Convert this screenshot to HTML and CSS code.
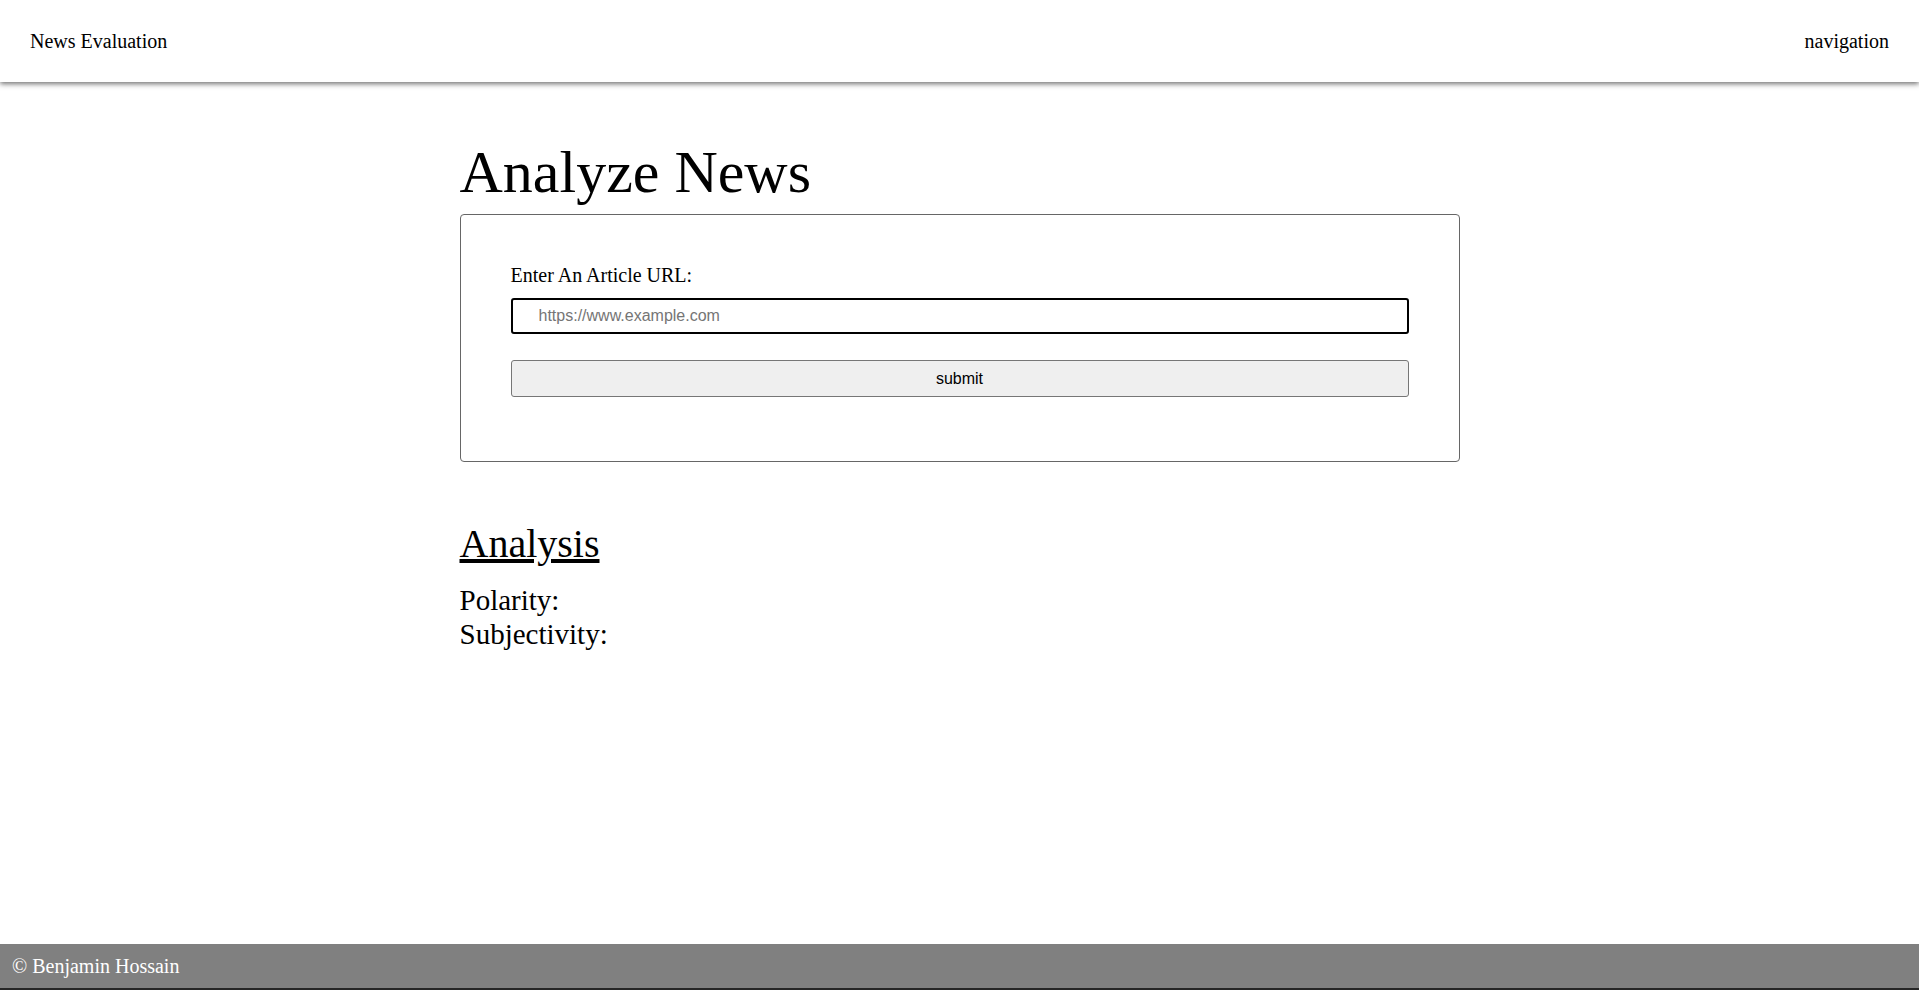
FILE: index.html
```html
<!DOCTYPE html>
<html lang="en">
<head>
<meta charset="utf-8">
<title>News Evaluation</title>
<link rel="stylesheet" href="styles.css">
</head>
<body>
<div class="page">
  <header class="topbar">
    <div class="brand">News Evaluation</div>
    <nav class="nav">navigation</nav>
  </header>
  <main class="main">
    <section class="container">
      <h1 class="title">Analyze News</h1>
      <form class="card">
        <label class="label" for="url">Enter An Article URL:</label>
        <input class="url-input" id="url" type="text" placeholder="https://www.example.com">
        <button class="submit" type="button">submit</button>
      </form>
      <div class="analysis">
        <h2 class="analysis-title">Analysis</h2>
        <div class="result">Polarity:</div>
        <div class="result">Subjectivity:</div>
      </div>
    </section>
  </main>
  <footer class="footer">© Benjamin Hossain</footer>
</div>
</body>
</html>
```
FILE: styles.css
```css
html, body {
  margin: 0;
  padding: 0;
}
body {
  font-family: "Liberation Serif", "Times New Roman", serif;
  color: #000;
  background: #fff;
}
.page {
  min-height: 100vh;
  display: flex;
  flex-direction: column;
}
.topbar {
  height: 82px;
  padding: 0 30px;
  display: flex;
  align-items: center;
  justify-content: space-between;
  font-size: 20px;
  box-shadow: 0 2px 5px rgba(0, 0, 0, 0.55);
  position: relative;
  z-index: 1;
}
.main {
  flex: 1;
}
.container {
  width: 1000px;
  margin: 0 auto;
  padding-top: 56px;
}
.title {
  font-size: 60px;
  font-weight: normal;
  margin: 0 0 7px;
  line-height: normal;
}
.card {
  border: 1px solid #666;
  border-radius: 4px;
  padding: 49px 50px 64px;
  display: flex;
  flex-direction: column;
}
.label {
  font-size: 20px;
  line-height: 23px;
  margin-bottom: 11px;
}
.url-input {
  height: 36px;
  box-sizing: border-box;
  border: 2px solid #000;
  border-radius: 3px;
  padding: 0 26px;
  font-family: "Liberation Sans", Arial, sans-serif;
  font-size: 16px;
  color: #000;
  outline: none;
  margin: 0 0 26px;
}
.url-input::placeholder {
  color: #757575;
}
.submit {
  height: 37px;
  box-sizing: border-box;
  border: 1px solid #767676;
  border-radius: 3px;
  background: #efefef;
  font-family: "Liberation Sans", Arial, sans-serif;
  font-size: 16px;
  color: #000;
  margin: 0;
}
.analysis {
  margin-top: 58px;
}
.analysis-title {
  font-size: 40px;
  font-weight: normal;
  text-decoration: underline;
  margin: 0 0 16px;
  line-height: normal;
}
.result {
  font-size: 29px;
  line-height: 34px;
}
.footer {
  height: 44px;
  background: #808080;
  color: #fff;
  font-size: 20px;
  display: flex;
  align-items: center;
  padding: 0 12px;
  border-bottom: 2px solid #262626;
}
```
